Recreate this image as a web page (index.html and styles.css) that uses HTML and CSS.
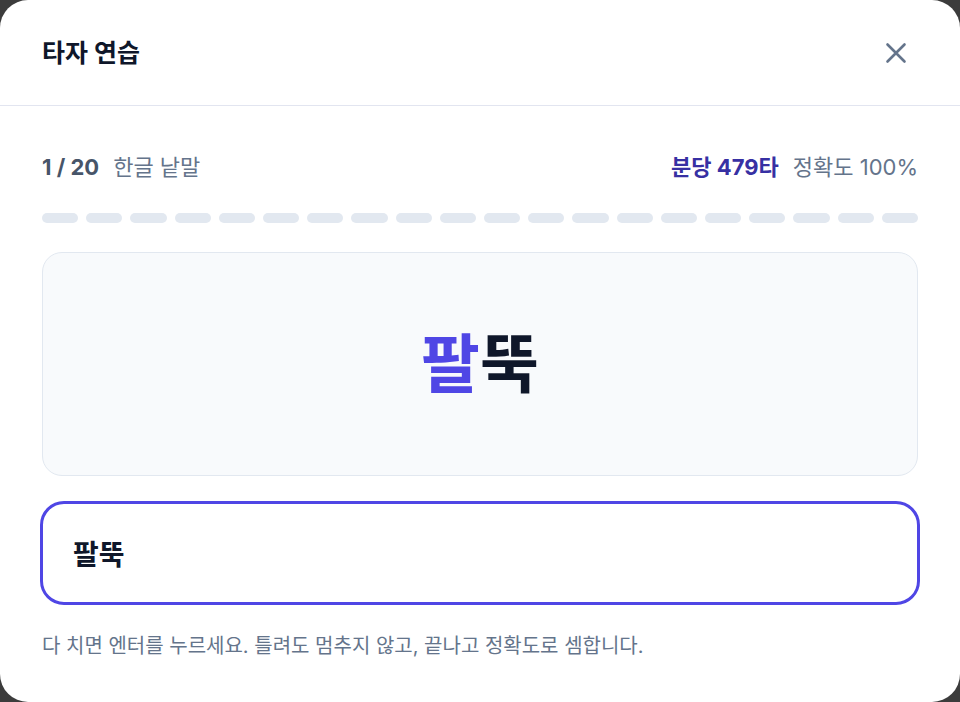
FILE: index.html
```html
<!DOCTYPE html>
<html lang="ko">
<head>
<meta charset="utf-8">
<title>타자 연습</title>
<link rel="stylesheet" href="styles.css">
</head>
<body>
<div class="modal">
  <header class="modal-header">
    <h1 class="title">타자 연습</h1>
    <button class="close" aria-label="닫기">
      <svg width="24" height="24" viewBox="0 0 24 24" fill="none" stroke="#64748b" stroke-width="2.6" stroke-linecap="round"><path d="M3.5 3.5 L20.5 20.5 M20.5 3.5 L3.5 20.5"/></svg>
    </button>
  </header>
  <main class="modal-body">
    <div class="stats">
      <div class="left"><span class="count">1 / 20</span><span class="cat">한글 낱말</span></div>
      <div class="right"><span class="speed">분당 479타</span><span class="acc">정확도 100%</span></div>
    </div>
    <div class="progress">
      <span></span><span></span><span></span><span></span><span></span>
      <span></span><span></span><span></span><span></span><span></span>
      <span></span><span></span><span></span><span></span><span></span>
      <span></span><span></span><span></span><span></span><span></span>
    </div>
    <div class="word-card"><span class="done">팔</span><span class="rest">뚝</span></div>
    <div class="input-box">팔뚝</div>
    <p class="hint">다 치면 엔터를 누르세요. 틀려도 멈추지 않고, 끝나고 정확도로 셈합니다.</p>
  </main>
</div>
</body>
</html>
```
FILE: styles.css
```css
html, body {
  margin: 0;
  padding: 0;
  height: 100%;
  background: #3c3c3c;
}
body {
  font-family: Inter, "Noto Sans CJK KR", sans-serif;
  color: #0f172a;
}
.modal {
  width: 960px;
  height: 702px;
  background: #ffffff;
  border-radius: 28px;
  overflow: hidden;
  box-sizing: border-box;
}
.modal-header {
  height: 105px;
  border-bottom: 1px solid #e2e5f0;
  display: flex;
  align-items: center;
  justify-content: space-between;
  padding: 0 46px 0 42px;
}
.title {
  margin: 0;
  font-size: 25px;
  font-weight: 700;
  color: #0f172a;
  line-height: 32px;
}
.close {
  border: 0;
  background: none;
  padding: 6px;
  display: flex;
  cursor: pointer;
}
.modal-body {
  padding: 46px 42px 0;
}
.stats {
  display: flex;
  justify-content: space-between;
  align-items: center;
  height: 30px;
  font-size: 22px;
  line-height: 30px;
}
.left, .right {
  display: flex;
  gap: 14px;
  align-items: center;
}
.count {
  font-weight: 700;
  color: #475569;
}
.cat, .acc {
  color: #64748b;
}
.speed {
  font-weight: 700;
  color: #3730a3;
}
.progress {
  display: flex;
  gap: 8px;
  margin-top: 31px;
}
.progress span {
  flex: 1;
  height: 10px;
  border-radius: 5px;
  background: #e2e8f0;
}
.word-card {
  margin-top: 29px;
  height: 224px;
  box-sizing: border-box;
  border: 1px solid #e2e8f0;
  background: #f8fafc;
  border-radius: 20px;
  display: flex;
  align-items: center;
  justify-content: center;
  font-size: 64px;
  font-weight: 700;
  line-height: 1;
}
.done { color: #4f46e5; }
.rest { color: #0f172a; }
.input-box {
  margin: 25px -2px 0;
  height: 104px;
  box-sizing: border-box;
  border: 3px solid #4f46e5;
  border-radius: 24px;
  display: flex;
  align-items: center;
  padding-left: 30px;
  font-size: 28px;
  font-weight: 700;
  color: #0f172a;
}
.hint {
  margin: 26px 0 0;
  font-size: 20px;
  line-height: 30px;
  color: #64748b;
}
```
